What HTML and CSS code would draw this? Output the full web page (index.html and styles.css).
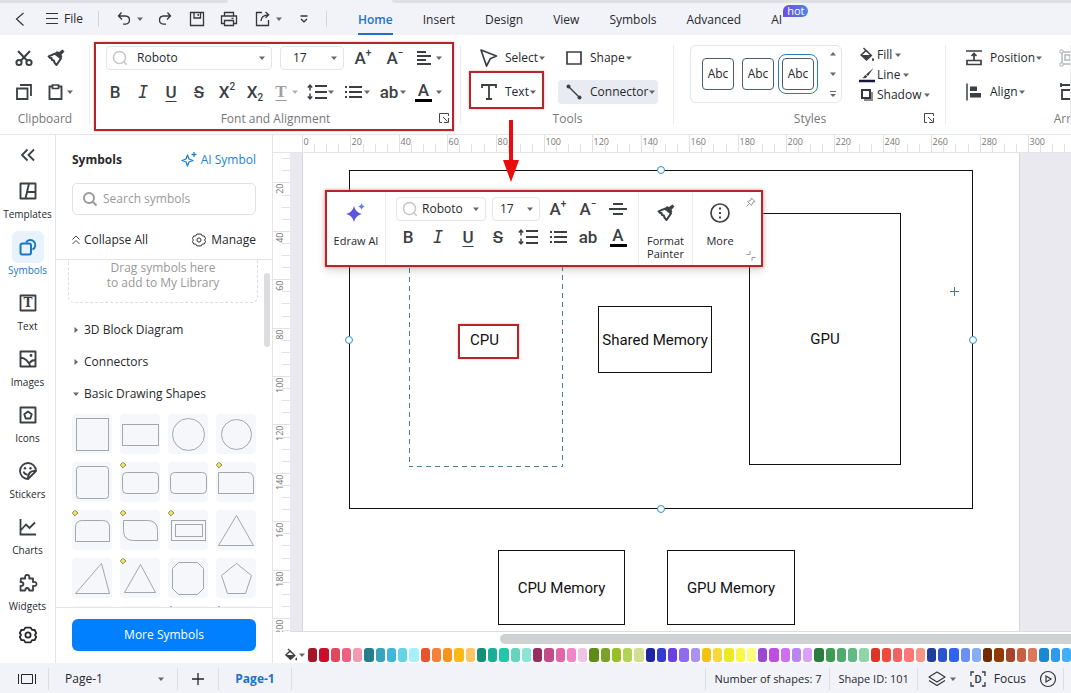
FILE: index.html
```
<!DOCTYPE html>
<html lang="en">
<head>
  <meta charset="utf-8">
  <title>Page-1</title>
  <link rel="stylesheet" href="styles.css">
</head>
<body>

  <!-- shared icons -->
  <svg class="defs" aria-hidden="true">
    <symbol id="caret" viewBox="0 0 8 8"><path d="M1 2.5h6L4 6z" fill="#666"/></symbol>
    <symbol id="caret-up" viewBox="0 0 8 8"><path d="M1 5.5h6L4 2z" fill="#666"/></symbol>
    <symbol id="find" viewBox="0 0 16 16"><circle cx="7.5" cy="7.5" r="6" fill="none" stroke="#c4c6ca" stroke-width="1.5"/><path d="M11.8 11.8l3 3" stroke="#c4c6ca" stroke-width="1.5"/></symbol>
    <symbol id="painter" viewBox="0 0 20 20"><path d="M16.500 1.500l2 2-3 3.300.8 2-1.500 1.500-5.500-5.500 1.500-1.500 2.200.8z" fill="#3c3f43"/><path d="M9 5.600l-6.400 2.800 1.600 1.700 1.300-.2.500 2.200 1.800.3.700 2.200 2 2.400 4.500-6.600z" fill="none" stroke="#3c3f43" stroke-width="2" stroke-linejoin="round"/></symbol>
    <symbol id="spacing" viewBox="0 0 20 20"><path d="M8 4h12M8 10h12M8 16h12" stroke="#3c3f43" stroke-width="2"/><path d="M3 3.500v5M3 11.500v5M.8 5.500L3 3.200l2.200 2.300M.8 14.500L3 16.800l2.200-2.300" fill="none" stroke="#3c3f43" stroke-width="1.500"/></symbol>
    <symbol id="bullets" viewBox="0 0 20 20"><path d="M6 5h13M6 10h13M6 15h13" stroke="#3c3f43" stroke-width="2"/><path d="M2 5h2M2 10h2M2 15h2" stroke="#3c3f43" stroke-width="2"/></symbol>
    <symbol id="launcher" viewBox="0 0 10 10"><path d="M3 9.500H.5v-9h9V3M4 4l4.500 4.500M5 9.500h4.500V5" fill="none" stroke="#44474b"/></symbol>
    <symbol id="bucket" viewBox="0 0 16 16"><path d="M7 3.500L12.300 8.500 7.500 13 2.200 8z" fill="none" stroke="#3c3f43" stroke-width="1.600"/><path d="M2.500 8h9.500l-4.700 4.700zM14 10.500c1.600 2.400 1.200 3.500 0 3.500s-1.600-1.100 0-3.500z" fill="#3c3f43"/><path d="M4.500 1l3.500 3.500" stroke="#3c3f43" stroke-width="1.500"/></symbol>
    <symbol id="gear" viewBox="0 0 20 20"><path d="M7.300 2.600h5.400l1.300 2.300 2.700.1 1.500 3.200-1.300 1.800 1.300 1.800-1.500 3.200-2.700.1-1.300 2.300H7.300L6 15.100l-2.700-.1-1.500-3.200L3.100 10 1.800 8.200 3.300 5 6 4.900z" fill="none" stroke="currentColor" stroke-width="var(--w, 1.800)" stroke-linejoin="round"/><circle cx="10" cy="10" r="2.600" fill="none" stroke="currentColor" stroke-width="var(--w, 1.800)"/></symbol>
    <g id="knob"><path d="M3 .2L5.800 3 3 5.800.2 3z" fill="#ece48a" stroke="#8a8430"/></g>
  </svg>

  <header class="titlebar">
    <div class="tabs-edge"><span class="edge-left"></span><span class="edge-right"></span></div>
    <div class="menu">
      <div class="quick">
        <button aria-label="Back"><svg width="20" height="20"><path d="M13.500 4L6.500 10l7 6.500" fill="none" stroke="#33363a" stroke-width="1.200"/></svg></button>
        <button class="file"><svg width="14" height="14"><path d="M1 1.500h12M1 6.500h12M1 11.500h12" stroke="#33363a"/></svg>File</button>
        <i class="rule"></i>
        <button class="split" aria-label="Undo"><svg width="20" height="20"><path d="M7.500 3.500L4.500 7l3.500 3.500M5 7h6.500q4 .3 4 4t-4 4.200H9" fill="none" stroke="#33363a" stroke-width="1.300"/></svg><svg class="caret"><use href="#caret"/></svg></button>
        <button aria-label="Redo"><svg width="20" height="20"><path d="M12.500 3.500L15.500 7 12 10.500M15 7H8.500q-4 .3-4 4t4 4.200H11" fill="none" stroke="#33363a" stroke-width="1.300"/></svg></button>
        <button aria-label="Save"><svg width="20" height="20"><path d="M3.500 3.500h13v13h-13zM7 3.500v5.500h6.500V3.500M11.200 5v2" fill="none" stroke="#33363a" stroke-width="1.300"/></svg></button>
        <button aria-label="Print"><svg width="20" height="20"><path d="M5.500 7V3.500h9V7M5 14.500H2.500V7h15v7.500H15M5.500 11.500h9v5h-9zM12.500 9.300h2" fill="none" stroke="#33363a" stroke-width="1.300"/></svg></button>
        <button class="split" aria-label="Share"><svg width="20" height="20"><path d="M9 3.500H3.500v13h12V11M8 12q.3-6 7.500-6.200M12.500 3l3.200 2.800-3.200 3" fill="none" stroke="#33363a" stroke-width="1.300"/></svg><svg class="caret"><use href="#caret"/></svg></button>
        <button aria-label="Customize"><svg width="20" height="20"><path d="M6.500 7h7M7 10l3 2.800 3-2.800" fill="none" stroke="#33363a" stroke-width="1.300"/></svg></button>
        <i class="rule"></i>
      </div>
      <nav>
        <a class="active" href="#">Home</a>
        <a href="#">Insert</a>
        <a href="#">Design</a>
        <a href="#">View</a>
        <a href="#">Symbols</a>
        <a href="#">Advanced</a>
        <a class="ai" href="#">AI<span class="hot">hot</span></a>
      </nav>
    </div>
  </header>

  <section class="ribbon">
    <div class="group clipboard">
      <div class="row">
        <button class="tool" aria-label="Cut"><svg width="20" height="20"><g fill="none" stroke="#3c3f43" stroke-width="2"><circle cx="5" cy="14.500" r="2.600"/><circle cx="15" cy="14.500" r="2.600"/><path d="M4 3l9 9.500M16 3l-9 9.500"/></g></svg></button>
        <button class="tool" aria-label="Format painter"><svg width="20" height="20"><use href="#painter"/></svg></button>
      </div>
      <div class="row">
        <button class="tool" aria-label="Copy"><svg width="20" height="20"><path d="M3 6.500h10.500V17H3zM6 3h11v11" fill="none" stroke="#3c3f43" stroke-width="1.800"/></svg></button>
        <button class="tool" aria-label="Paste"><svg width="20" height="20"><path d="M7 4.500H3.500V17h12V4.500H12" fill="none" stroke="#3c3f43" stroke-width="1.900"/><path d="M6.500 3h6v3.500h-6z" fill="none" stroke="#3c3f43" stroke-width="1.700"/></svg></button>
        <svg class="caret"><use href="#caret"/></svg>
      </div>
      <div class="caption">Clipboard</div>
    </div>

    <div class="group font">
      <div class="row first">
        <label class="combo family"><svg width="16" height="16"><use href="#find"/></svg><select aria-label="Font"><option>Roboto</option></select><svg class="caret"><use href="#caret"/></svg></label>
        <label class="combo size"><select aria-label="Font size"><option>17</option></select><svg class="caret"><use href="#caret"/></svg></label>
        <button class="tool glyph" aria-label="Increase font">A<sup>+</sup></button>
        <button class="tool glyph" aria-label="Decrease font">A<sup>−</sup></button>
        <button class="tool split" aria-label="Align text"><svg width="20" height="20"><path d="M2 4h9M2 8h14M2 12h9M2 16h14" stroke="#3c3f43" stroke-width="2"/></svg><svg class="caret"><use href="#caret"/></svg></button>
      </div>
      <div class="row second">
        <button class="tool glyph">B</button>
        <button class="tool glyph italic">I</button>
        <button class="tool glyph under">U</button>
        <button class="tool glyph strike">S</button>
        <button class="tool glyph">X<sup>2</sup></button>
        <button class="tool glyph">X<sub>2</sub></button>
        <span class="splits">
          <button class="tool split faded glyph"><span class="under serif">T</span><svg class="caret"><use href="#caret"/></svg></button>
          <button class="tool split" aria-label="Line spacing"><svg width="20" height="20"><use href="#spacing"/></svg><svg class="caret"><use href="#caret"/></svg></button>
          <button class="tool split" aria-label="Bullets"><svg width="20" height="20"><use href="#bullets"/></svg><svg class="caret"><use href="#caret"/></svg></button>
          <button class="tool split glyph"><span>ab</span><svg class="caret"><use href="#caret"/></svg></button>
          <button class="tool split glyph"><span class="color">A</span><svg class="caret"><use href="#caret"/></svg></button>
        </span>
      </div>
      <div class="caption">Font and Alignment</div>
      <svg class="launcher"><use href="#launcher"/></svg>
      <div class="mark"></div>
    </div>

    <div class="group tools">
      <div class="pair">
        <button class="wide"><svg width="20" height="20"><path d="M2 2l15.500 6-6.300 2.800L7.500 18z" fill="none" stroke="#3c3f43" stroke-width="1.700" stroke-linejoin="round"/></svg>Select<svg class="caret"><use href="#caret"/></svg></button>
        <button class="wide"><svg width="20" height="20"><path d="M3 4h14v12H3z" fill="none" stroke="#3c3f43" stroke-width="1.700"/></svg>Shape<svg class="caret"><use href="#caret"/></svg></button>
        <button class="wide text-tool"><svg width="20" height="20"><path d="M3 6V3h14v3M10 3v14M7 17h6" fill="none" stroke="#3c3f43" stroke-width="1.800"/></svg>Text<svg class="caret"><use href="#caret"/></svg>
          <span class="mark"></span>
          <svg class="arrow" width="18" height="62"><path d="M7 0h4v40h6L9 62 1 40h6z" fill="#e80c0c"/></svg>
        </button>
        <button class="wide on"><svg width="20" height="20"><path d="M4 4l12 12" stroke="#3c3f43" stroke-width="1.400"/><circle cx="4.500" cy="4.500" r="2" fill="#3c3f43"/><circle cx="15.500" cy="15.500" r="2" fill="#3c3f43"/></svg>Connector<svg class="caret"><use href="#caret"/></svg></button>
      </div>
      <div class="caption">Tools</div>
    </div>

    <div class="group styles">
      <div class="style-row">
        <div class="gallery">
          <button>Abc</button><button>Abc</button><button class="picked">Abc</button>
          <div class="steps">
            <svg class="caret"><use href="#caret-up"/></svg>
            <svg class="caret"><use href="#caret"/></svg>
            <svg width="8" height="8"><path d="M1 1.500h6" stroke="#666"/><path d="M1 4h6L4 7z" fill="#666"/></svg>
          </div>
        </div>
        <div class="paint">
          <button><svg width="16" height="16"><use href="#bucket"/></svg>Fill<svg class="caret"><use href="#caret"/></svg></button>
          <button><svg width="16" height="16"><path d="M14.500 1L9 9 7 7.500zM6.300 7.800l2 1.700q-1 2.500-5 1.500 1.500-.5 3-3.200z" fill="#3c3f43"/><path d="M0 14h16" stroke="#14163a" stroke-width="2.500"/></svg>Line<svg class="caret"><use href="#caret"/></svg></button>
          <button><svg width="16" height="16"><path d="M5 5h9v9H5z" fill="#8b8d90"/><path d="M3 3h8v8H3z" fill="#fff" stroke="#33363a" stroke-width="2"/></svg>Shadow<svg class="caret"><use href="#caret"/></svg></button>
        </div>
      </div>
      <div class="caption">Styles</div>
      <svg class="launcher"><use href="#launcher"/></svg>
    </div>

    <div class="group arrange">
      <div class="pair">
        <button class="wide"><svg width="20" height="20"><path d="M2 3h16M10 12V6M7.500 8L10 5.500 12.500 8M3 12.500h14v4H3z" fill="none" stroke="#3c3f43" stroke-width="1.700"/></svg>Position<svg class="caret"><use href="#caret"/></svg></button>
        <button class="wide faded" aria-label="Group"><svg width="20" height="20"><path d="M4 4h12v12H4zM7 7h5v5H7zM10 12h4" fill="none" stroke="#6c6f73" stroke-width="1.500"/><g fill="#fff" stroke="#6c6f73"><path d="M2 2h3v3H2zM15 2h3v3h-3zM2 15h3v3H2zM15 15h3v3h-3z"/></g></svg></button>
        <button class="wide"><svg width="20" height="20"><path d="M3 1.500v17" stroke="#3c3f43" stroke-width="1.500"/><path d="M6 4.500h7V9H6zM6 11h11v4.500H6z" fill="#3c3f43"/></svg>Align<svg class="caret"><use href="#caret"/></svg></button>
        <button class="wide" aria-label="Size"><svg width="20" height="20"><path d="M3 3h14M4 8h11v9H4zM3 1v4M17 1v4" fill="none" stroke="#3c3f43" stroke-width="1.800"/></svg></button>
      </div>
      <div class="caption">Arrange</div>
    </div>
  </section>

  <main>
    <aside class="rail">
      <button class="fold" aria-label="Collapse panel"><svg width="20" height="20"><path d="M9.500 4.500L4 10l5.500 5.500M16 4.500L10.500 10l5.500 5.500" fill="none" stroke="#3c3f43" stroke-width="1.800"/></svg></button>
      <button><span class="pic"><svg width="20" height="20"><path d="M2.500 2.500h15v15h-15zM11 2.500l-3.500 15M9.500 11h8" fill="none" stroke="#3c3f43" stroke-width="1.900" stroke-linejoin="round"/></svg></span>Templates</button>
      <button class="active"><span class="pic"><svg width="20" height="20"><path d="M8 5.500a5 5 0 1 1 6.500 7" fill="none" stroke="#1a78c2" stroke-width="2"/><rect x="2.500" y="6.500" width="10.500" height="11" rx="2" fill="none" stroke="#1a78c2" stroke-width="2"/></svg></span>Symbols</button>
      <button><span class="pic"><svg width="20" height="20"><path d="M2.500 2.500h15v15h-15z" fill="none" stroke="#3c3f43" stroke-width="1.800" stroke-linejoin="round"/><text class="icon-t" x="10" y="14">T</text></svg></span>Text</button>
      <button><span class="pic"><svg width="20" height="20"><path d="M2.500 2.500h15v15h-15zM2.500 8.500q7 1 10 9M17.500 11q-4 0-6 3" fill="none" stroke="#3c3f43" stroke-width="1.900" stroke-linejoin="round"/><circle cx="13" cy="6.500" r="1.400" fill="#3c3f43"/></svg></span>Images</button>
      <button><span class="pic"><svg width="20" height="20"><path d="M2.500 2.500h15v15h-15zM10 6.500l3.700 2.800-1.400 4.200H7.700L6.300 9.300z" fill="none" stroke="#3c3f43" stroke-width="1.900" stroke-linejoin="round"/></svg></span>Icons</button>
      <button><span class="pic"><svg width="20" height="20"><path d="M18 10a8 8 0 1 0-8 8zM18 10q-8-1-8 8M5.500 10.500q1 3 4 3.200" fill="none" stroke="#3c3f43" stroke-width="1.800" stroke-linejoin="round"/><circle cx="7" cy="7.300" r="1.200" fill="#3c3f43"/><circle cx="12.500" cy="7.300" r="1.200" fill="#3c3f43"/></svg></span>Stickers</button>
      <button><span class="pic"><svg width="20" height="20"><path d="M2.500 2v15.500H18M3 13l5-5.500 3.500 3.500L17 5.500" fill="none" stroke="#3c3f43" stroke-width="1.800"/></svg></span>Charts</button>
      <button><span class="pic"><svg width="20" height="20"><path d="M3 5.500h4.200q-.8-3.500 2-3.500t2 3.500H15V9q3.500-.5 3.500 2t-3.500 2v4.500h-3.800q-.3-2.500-2-2.500t-2 2.500H2.500V13q3 0 3-2t-3-2z" fill="none" stroke="#3c3f43" stroke-width="1.800" stroke-linejoin="round"/></svg></span>Widgets</button>
      <button class="last" aria-label="Settings"><svg width="20" height="20"><use href="#gear"/></svg></button>
    </aside>

    <aside class="panel">
      <div class="panel-head">
        <h2>Symbols</h2>
        <a href="#"><svg width="16" height="16"><path d="M6.500 3l1.500 4 4 1.500-4 1.500-1.500 4L5 10 1 8.500 5 7zM13 0v5M10.500 2.500h5" fill="none" stroke="#1f7fd6" stroke-width="1.300" stroke-linejoin="round"/></svg>AI Symbol</a>
      </div>
      <label class="search"><svg width="16" height="16"><circle cx="7" cy="7" r="5" fill="none" stroke="#999" stroke-width="2"/><path d="M10.500 10.500l4 4" stroke="#999" stroke-width="2"/></svg><input type="text" placeholder="Search symbols"></label>
      <div class="panel-tools">
        <button><svg width="8" height="12"><path d="M.5 5.500L4 2l3.500 3.500M.5 10L4 6.500 7.500 10" fill="none" stroke="#44474b"/></svg>Collapse All</button>
        <button class="manage"><svg width="16" height="16"><use href="#gear"/></svg>Manage</button>
      </div>
      <div class="library">
        <div class="drop">Drag symbols here<br>to add to My Library</div>
        <button class="section closed"><svg class="caret"><use href="#caret"/></svg>3D Block Diagram</button>
        <button class="section closed"><svg class="caret"><use href="#caret"/></svg>Connectors</button>
        <button class="section"><svg class="caret"><use href="#caret"/></svg>Basic Drawing Shapes</button>
        <div class="shapes">
          <svg><rect x="4.500" y="4.500" width="32" height="32"/></svg>
          <svg><rect x="2.500" y="10.500" width="36" height="21"/></svg>
          <svg><circle cx="20.500" cy="20.500" r="16"/></svg>
          <svg><circle cx="20.500" cy="20.500" r="15"/></svg>
          <svg><rect x="4.500" y="4.500" width="32" height="32" rx="3"/></svg>
          <svg><rect x="2.500" y="10.500" width="36" height="21" rx="4"/><use href="#knob"/></svg>
          <svg><rect x="2.500" y="10.500" width="36" height="21" rx="4"/></svg>
          <svg><path d="M2.500 10.500h29q6 0 6 7v14h-35z"/><use href="#knob"/></svg>
          <svg><path d="M3.500 31.500V17q0-6.500 7-6.500h20q7 0 7 6.500v14.500z"/><use href="#knob"/></svg>
          <svg><path d="M3.500 10.500h24q10 0 10 10v10h-24q-10 0-10-10z"/><use href="#knob"/></svg>
          <svg><rect x="3.500" y="10.500" width="34" height="20"/><rect x="7.500" y="14.500" width="27" height="12"/><use href="#knob"/></svg>
          <svg><path d="M20.500 5.500l17 30h-35z"/></svg>
          <svg><path d="M29.500 5.500l8 30h-34z"/></svg>
          <svg><path d="M20.500 6.500l15 28h-31z"/><use href="#knob"/></svg>
          <svg><path d="M10.500 4.500h19l6 6v20l-6 6h-19l-6-6v-20z"/></svg>
          <svg><path d="M20.500 5.500l15 12-6 18h-18l-6-18z"/></svg>
          <svg><path d="M12.500 4.500h15l8 16-8 16h-15l-8-16z"/></svg>
          <svg><path d="M12.500 4.500h15l8 8v16l-8 8h-15l-8-8v-16z"/></svg>
          <svg><path d="M12.500 8.500h24l-8 24h-24z"/><use href="#knob"/></svg>
          <svg><path d="M10.500 8.500h19l7 24h-33z"/><use href="#knob"/></svg>
        </div>
        <i class="thumb"></i>
      </div>
      <div class="panel-foot"><button class="more">More Symbols</button></div>
    </aside>

    <section class="work">
      <svg id="ruler-x" class="ruler-x"></svg>
      <div class="desk">
        <svg id="ruler-y" class="ruler-y"></svg>
        <div class="canvas">
          <div class="paper"></div>
          <div class="node outer"><i class="dot n"></i><i class="dot e"></i><i class="dot s"></i><i class="dot w"></i></div>
          <div class="node cpu"><svg class="dashes"><rect width="100%" height="100%"/></svg><span>CPU</span></div>
          <div class="node shared">Shared Memory</div>
          <div class="node gpu">GPU</div>
          <div class="node cpu-mem">CPU Memory</div>
          <div class="node gpu-mem">GPU Memory</div>
          <svg class="cross" width="9" height="9"><path d="M4.500 0v9M0 4.500h9" stroke="#2f7fa8"/></svg>

          <div class="float">
            <button class="stack"><svg width="20" height="20"><path d="M8 3q1.500 6.500 8 8-6.500 1.500-8 8-1.500-6.500-8-8 6.500-1.500 8-8z" fill="#5a55e0"/><path d="M15.500 0q.5 3 3.500 3.500-3 .5-3.500 3.500-.5-3-3.500-3.500 3-.5 3.500-3.500z" fill="#5b7de8"/></svg>Edraw AI</button>
            <div class="float-main">
              <div class="row">
                <label class="combo"><svg width="16" height="16"><use href="#find"/></svg><select aria-label="Font"><option>Roboto</option></select><svg class="caret"><use href="#caret"/></svg></label>
                <label class="combo size"><select aria-label="Font size"><option>17</option></select><svg class="caret"><use href="#caret"/></svg></label>
                <button class="tool glyph" aria-label="Increase font">A<sup>+</sup></button>
                <button class="tool glyph" aria-label="Decrease font">A<sup>−</sup></button>
                <button class="tool" aria-label="Align text"><svg width="20" height="20"><path d="M5 5h10M1 10h18M5 15h10" stroke="#3c3f43" stroke-width="2"/></svg></button>
              </div>
              <div class="row">
                <button class="tool glyph">B</button>
                <button class="tool glyph italic">I</button>
                <button class="tool glyph under">U</button>
                <button class="tool glyph strike">S</button>
                <button class="tool" aria-label="Line spacing"><svg width="20" height="20"><use href="#spacing"/></svg></button>
                <button class="tool" aria-label="Bullets"><svg width="20" height="20"><use href="#bullets"/></svg></button>
                <button class="tool glyph">ab</button>
                <button class="tool glyph"><span class="color">A</span></button>
              </div>
            </div>
            <button class="stack"><svg width="20" height="20"><use href="#painter"/></svg>Format<br>Painter</button>
            <button class="stack"><svg width="20" height="20"><circle cx="10" cy="10" r="9" fill="none" stroke="#3c3f43" stroke-width="1.700"/><path d="M10 4.500v2M10 9v2M10 13.500v2" stroke="#3c3f43" stroke-width="2"/></svg>More</button>
            <svg class="pin" width="10" height="10"><path d="M5.500 1L9 4.500 7 5 5.500 8.500 1.500 4.500 5 3zM3.300 6.700L.5 9.500" fill="none" stroke="#999"/></svg>
            <svg class="grip" width="10" height="10"><path d="M4 0v3.500H.5M9.500 6.500H6V10" fill="none" stroke="#999"/></svg>
          </div>
        </div>
      </div>
      <div class="hscroll"><i></i></div>
      <div class="palette">
        <button aria-label="Fill color"><svg width="14" height="14"><use href="#bucket"/></svg><svg class="caret"><use href="#caret"/></svg></button>
        <div id="swatches" class="swatches"></div>
      </div>
    </section>
  </main>

  <footer class="status">
    <button class="view" aria-label="Page view"><svg width="18" height="12"><path d="M.5 1v10M17.500 1v10M3.500 1.500h11v9h-11z" fill="none" stroke="#22252a"/></svg></button>
    <label class="page"><select aria-label="Page"><option>Page-1</option></select><svg class="caret"><use href="#caret"/></svg></label>
    <button class="add" aria-label="Add page"><svg width="12" height="12"><path d="M6 0v12M0 6h12" stroke="#22252a" stroke-width="1.300"/></svg></button>
    <a class="tab" href="#">Page-1</a>
    <span class="info">Number of shapes: 7</span>
    <span class="info">Shape ID: 101</span>
    <div class="modes">
      <button aria-label="Layers"><svg width="18" height="16"><path d="M9 1l8 5-8 5-8-5zM1 9.500l8 5 8-5" fill="none" stroke="#33363a" stroke-width="1.200" stroke-linejoin="round"/></svg><svg class="caret"><use href="#caret"/></svg></button>
      <button class="focus"><svg width="16" height="16"><path d="M4 1H1v4M12 1h3v4M4 15H1v-4M12 15h3v-4" fill="none" stroke="#33363a" stroke-width="1.300"/><text class="icon-d" x="8" y="12">D</text></svg>Focus</button>
      <button aria-label="Play"><svg width="18" height="18"><circle cx="9" cy="9" r="7.500" fill="none" stroke="#33363a" stroke-width="1.200"/><path d="M7 6l5 3-5 3z" fill="none" stroke="#33363a" stroke-width="1.200"/></svg></button>
    </div>
  </footer>

  <script>
    const colors = [
      "#a3162a", "#c8102e", "#e0485f", "#ee6080", "#f29bb0",
      "#287d8c", "#38a3bd", "#41b6d8", "#63d4e4", "#a8eefb",
      "#e8542e", "#f5803a", "#f79420", "#fcb814", "#fcc565",
      "#178f74", "#1aae96", "#22c7a8", "#66d3bf", "#8be5d5",
      "#962e62", "#c24c88", "#e066a8", "#f484c8", "#efc4e2",
      "#5e8a18", "#78a22a", "#98bf28", "#b2d353", "#d2de92",
      "#1f25a2", "#343bd2", "#6a3fe0", "#8f6cea", "#ab92f0",
      "#f2c40f", "#f7d93a", "#eae827", "#f8f750", "#fcfc80",
      "#9b4ad0", "#c04ddf", "#d06df0", "#b885f5", "#dba0f7",
      "#2b7d3f", "#3d9b55", "#50a96e", "#62b985", "#8fd5a8",
      "#dc3527", "#f14a3c", "#ee6464", "#fb7777", "#f69488",
      "#203f9b", "#2c54cc", "#3064ee", "#6a8ff5", "#88adf2",
      "#6e2c08", "#913a02", "#a2452c", "#c75f42", "#dd7757",
      "#1b88cf", "#2c9bef", "#45aef8"
    ];
    const swatches = document.getElementById("swatches");
    colors.forEach(color => {
      swatches.innerHTML += `<button style="background:${color}" aria-label="${color}"></button>`;
    });

    // 20 units on the ruler are 48.4px
    const step = 48.4 / 4;

    function drawRulers() {
      const rulerX = document.getElementById("ruler-x");
      const rulerY = document.getElementById("ruler-y");
      const width = rulerX.getBoundingClientRect().width;
      const height = rulerY.getBoundingClientRect().height;
      let x = "", y = "";
      for (let i = 0; 29 + i * step < width; i++) {
        const major = i % 4 === 0;
        const pos = Math.round(29 + i * step) + 0.5;
        x += `<path d="M${pos} ${major ? 0 : 9}V18"/>`;
        if (major) x += `<text x="${pos + 1}" y="10">${i * 5}</text>`;
      }
      for (let i = 2; i * step - 18 < height; i++) {
        const major = i % 4 === 0;
        const pos = Math.round(i * step) - 18.5;
        y += `<path d="M${major ? 0 : 9} ${pos}H17"/>`;
        if (major) y += `<text text-anchor="end" transform="translate(10 ${pos + 1}) rotate(-90)">${i * 5}</text>`;
      }
      rulerX.innerHTML = x;
      rulerY.innerHTML = y;
    }

    drawRulers();
    window.onresize = drawRulers;
  </script>
</body>
</html>
```
FILE: styles.css
```
* {
  box-sizing: border-box;
}
body {
  margin: 0;
  height: 100vh;
  display: flex;
  flex-direction: column;
  overflow: hidden;
  background: #fff;
  color: #26282c;
  font-family: "Open Sans", "Noto Sans", sans-serif;
  font-size: 12px;
  line-height: 16px;
}
button, select, input {
  font: inherit;
  color: inherit;
  background: none;
  border: none;
  padding: 0;
  margin: 0;
}
button {
  display: flex;
  align-items: center;
  justify-content: center;
  white-space: nowrap;
  cursor: pointer;
}
a {
  color: inherit;
  text-decoration: none;
}
svg {
  display: block;
  flex: none;
}
select {
  appearance: none;
  flex: 1;
  min-width: 0;
}
.defs {
  position: absolute;
  width: 0;
  height: 0;
}
.caret {
  width: 8px;
  height: 8px;
}

/* title bar */
.titlebar {
  flex: none;
  height: 35px;
  background: #f2f3f9;
}
.tabs-edge {
  display: flex;
  justify-content: space-between;
  gap: 164px;
  height: 3px;
}
.tabs-edge span {
  background: #dfe0e6;
}
.edge-left {
  width: 228px;
  border-bottom-right-radius: 4px;
}
.edge-right {
  flex: 1;
  border-bottom-left-radius: 4px;
}
.menu {
  display: flex;
  height: 32px;
}
.quick {
  display: flex;
  align-items: center;
  padding-left: 4px;
}
.quick button {
  width: 32px;
}
.quick .file {
  width: 56px;
  gap: 5px;
}
.quick .split {
  width: 43px;
  padding-left: 2px;
  gap: 2px;
}
.quick .rule {
  width: 1px;
  height: 16px;
  margin: 0 7px 0 6px;
  background: #d4d6de;
}
nav {
  display: flex;
  gap: 30px;
  padding-left: 24px;
}
nav a {
  position: relative;
  padding-top: 2px;
  line-height: 30px;
}
nav .active {
  color: #1a73c8;
  font-weight: 600;
  border-bottom: 2px solid #1a73c8;
}
.hot {
  position: absolute;
  left: 12px;
  top: 2px;
  padding: 0 4px;
  border-radius: 6px 6px 6px 0;
  background: linear-gradient(90deg, #6b4ede, #4c84e6);
  color: #fff;
  font-size: 11px;
  line-height: 12px;
}

/* ribbon */
.ribbon {
  flex: none;
  display: flex;
  height: 100px;
  border-bottom: 1px solid #e4e5ea;
}
.group {
  position: relative;
  flex: none;
  padding-top: 6px;
}
.group::after {
  content: "";
  position: absolute;
  right: 0;
  top: 10px;
  bottom: 10px;
  border-right: 1px solid #ebecf0;
}
.clipboard {
  width: 90px;
}
.font {
  width: 371px;
}
.tools {
  width: 213px;
}
.styles {
  width: 272px;
}
.arrange {
  flex: 1;
  min-width: 0;
  overflow: hidden;
}
.row {
  display: flex;
  align-items: center;
  height: 34px;
}
.tool {
  width: 28px;
  height: 24px;
}
.clipboard .row {
  padding-left: 8px;
}
.clipboard .tool {
  width: 32px;
}
.clipboard .caret {
  margin-left: -6px;
}
.caption {
  color: #777;
  text-align: center;
  line-height: 20px;
}
.combo {
  display: flex;
  align-items: center;
  height: 24px;
  border: 1px solid #e4e5ea;
  border-radius: 4px;
  padding: 0 5px;
  gap: 4px;
}
.family {
  width: 166px;
  gap: 9px;
}
.font .size {
  width: 64px;
  margin: 0 3px 0 8px;
  padding-left: 12px;
}
.font .first {
  padding-left: 16px;
}
.first .tool {
  width: 32px;
}
.font .second {
  padding-left: 11px;
}
.splits {
  display: flex;
  margin-left: 2px;
}
.row .split {
  width: 36px;
  justify-content: flex-start;
}
.split > span {
  width: 20px;
}
.first .split {
  width: 44px;
  padding-left: 4px;
}
.glyph {
  color: #3c3f43;
  font-family: Roboto, sans-serif;
  font-size: 17px;
  font-weight: 500;
}
.glyph sup, .glyph sub {
  font-size: 10px;
  line-height: 13px;
}
.glyph sup {
  align-self: flex-start;
}
.glyph sub {
  align-self: flex-end;
}
.italic {
  font-family: "DejaVu Sans Mono", monospace;
  font-style: italic;
}
.under {
  text-decoration: underline;
  text-underline-offset: 3px;
}
.strike {
  text-decoration: line-through;
}
.serif {
  font-family: "Liberation Serif", serif;
  font-weight: 700;
}
.color {
  line-height: 17px;
  border-bottom: 3px solid #000;
}
.glyph > .color {
  width: 17px;
}
.split > .color {
  margin-right: 3px;
}
.faded {
  opacity: 0.5;
}
.launcher {
  position: absolute;
  right: 12px;
  bottom: 11px;
  width: 10px;
  height: 10px;
}
.mark {
  position: absolute;
  border: 2px solid #b3262b;
  box-shadow: 0 0 2px #f3a0a0;
  pointer-events: none;
}
.font .mark {
  left: 4px;
  right: 7px;
  top: 7px;
  bottom: 3px;
}
.pair {
  display: grid;
  grid-template-columns: 85px max-content;
  grid-auto-rows: 34px;
  align-items: center;
  padding-left: 12px;
}
.arrange .pair {
  grid-template-columns: 94px max-content;
}
.wide {
  height: 24px;
  justify-content: flex-start;
  padding: 0 2px 0 6px;
}
.wide svg:first-child {
  margin-right: 6px;
}
.wide.on {
  background: #e9ebf2;
  border-radius: 4px;
}
.text-tool {
  position: relative;
}
.text-tool .mark {
  left: -4px;
  right: 14px;
  top: -9px;
  bottom: -5px;
}
.arrow {
  position: absolute;
  left: 29px;
  top: 40px;
  z-index: 5;
}
.arrange .caption {
  width: 260px;
}
.style-row {
  display: flex;
  height: 68px;
  padding: 4px 0 0 16px;
  gap: 17px;
}
.gallery {
  display: flex;
  align-items: center;
  gap: 8px;
  height: 58px;
  width: 152px;
  border: 1px solid #e4e5ea;
  border-radius: 6px;
  padding-left: 11px;
}
.gallery button {
  width: 32px;
  height: 32px;
  border: 1px solid #4b5f6b;
  border-radius: 4px;
}
.gallery .picked {
  outline: 1px solid #2a7fae;
  outline-offset: 3px;
}
.steps {
  display: flex;
  flex-direction: column;
  gap: 12px;
  padding-left: 7px;
}
.paint button {
  height: 20px;
  gap: 2px;
}

/* main */
main {
  flex: 1;
  min-height: 0;
  display: flex;
}
.rail {
  flex: none;
  width: 56px;
  border-right: 1px solid #e4e5ea;
  display: flex;
  flex-direction: column;
  overflow: hidden;
}
.rail button {
  flex: none;
  flex-direction: column;
  justify-content: flex-start;
  height: 56px;
  font-size: 10px;
  line-height: 14px;
}
.rail .fold {
  height: 40px;
  justify-content: center;
}
.rail .last {
  height: 24px;
  justify-content: center;
}
.pic {
  display: grid;
  place-items: center;
  width: 32px;
  height: 32px;
  border-radius: 6px;
}
.rail .active {
  color: #1a78c2;
}
.active .pic {
  background: #e7f2fd;
}
.icon-t {
  font: 700 12px "DejaVu Serif", serif;
  text-anchor: middle;
  fill: #3c3f43;
}
.icon-d {
  font: 500 11px Roboto, sans-serif;
  text-anchor: middle;
  fill: #33363a;
}
.panel {
  flex: none;
  width: 217px;
  display: flex;
  flex-direction: column;
  border-right: 1px solid #e4e5ea;
}
.panel-head {
  display: flex;
  align-items: center;
  justify-content: space-between;
  height: 48px;
  padding: 2px 16px 0;
}
.panel-head h2 {
  margin: 0;
  font-size: 12px;
  font-weight: 700;
}
.panel-head a {
  display: flex;
  gap: 4px;
  color: #1f7fd6;
}
.search {
  display: flex;
  align-items: center;
  gap: 5px;
  height: 32px;
  margin: 0 16px;
  padding: 0 9px;
  border: 1px solid #e0e1e6;
  border-radius: 5px;
}
.search input {
  flex: 1;
  min-width: 0;
}
.search input::placeholder {
  color: #9a9a9a;
}
.panel-tools {
  display: flex;
  justify-content: space-between;
  height: 45px;
  padding: 6px 16px 0;
  border-bottom: 1px solid #e4e5ea;
}
.panel-tools button {
  gap: 4px;
}
.manage {
  --w: 1.2;
}
.library {
  position: relative;
  flex: 1;
  min-height: 0;
  overflow: hidden;
}
.drop {
  height: 43px;
  margin: 0 14px 11px 12px;
  border: 1px dashed #dcdde2;
  border-top: none;
  border-radius: 0 0 6px 6px;
  color: #999;
  text-align: center;
  line-height: 15px;
}
.section {
  width: 100%;
  height: 32px;
  justify-content: flex-start;
  gap: 4px;
  padding-left: 16px;
}
.closed .caret {
  transform: rotate(-90deg);
}
.shapes {
  display: grid;
  grid-template-columns: repeat(4, 40px);
  gap: 8px;
  padding: 4px 16px 0;
}
.shapes svg {
  width: 40px;
  height: 40px;
  border-radius: 4px;
  background: #f6f7fb;
  fill: none;
  stroke: #a3a6ab;
}
.thumb {
  position: absolute;
  right: 2px;
  top: 13px;
  width: 6px;
  height: 74px;
  border-radius: 3px;
  background: #dcdde0;
}
.panel-foot {
  height: 56px;
  padding: 11px 16px 0;
  border-top: 1px solid #e4e5ea;
}
.more {
  width: 100%;
  height: 32px;
  border-radius: 6px;
  background: #0080ff;
  color: #fff;
}

/* drawing area */
.work {
  flex: 1;
  min-width: 0;
  display: flex;
  flex-direction: column;
}
.ruler-x {
  width: 100%;
  height: 18px;
  border-bottom: 1px solid #e4e5ea;
}
.ruler-x, .ruler-y {
  stroke: #e0e1e5;
  font-size: 9px;
}
.ruler-x text, .ruler-y text {
  fill: #777;
  stroke: none;
}
.desk {
  flex: 1;
  min-height: 0;
  display: flex;
}
.ruler-y {
  width: 17px;
  height: 100%;
}
.canvas {
  position: relative;
  flex: 1;
  padding: 0 51px 0 12px;
  background: #e9e9ef;
  border-bottom: 1px solid #dcdde2;
  font-family: Roboto, sans-serif;
}
.paper {
  height: 100%;
  background: #fff;
  border: 1px solid #d5d6dc;
  border-width: 0 1px;
}
.node {
  position: absolute;
  display: grid;
  place-items: center;
  border: 1px solid #111;
  color: #111;
  font-size: 15px;
}
.outer {
  left: 59px;
  top: 17px;
  width: 624px;
  height: 339px;
}
.cpu {
  left: 119px;
  top: 60px;
  width: 154px;
  height: 254px;
  border: none;
}
.dashes {
  position: absolute;
  width: 100%;
  height: 100%;
}
.dashes rect {
  fill: none;
  stroke: #4a7f9c;
  stroke-width: 2;
  stroke-dasharray: 5 4;
}
.cpu span {
  margin: 2px 0 0 5px;
  padding: 6px 18px 9px 10px;
  border: 2px solid #b3262b;
  box-shadow: 0 0 2px #f3a0a0;
}
.shared {
  left: 308px;
  top: 153px;
  width: 114px;
  height: 67px;
}
.gpu {
  left: 459px;
  top: 60px;
  width: 152px;
  height: 252px;
}
.cpu-mem {
  left: 208px;
  top: 397px;
  width: 127px;
  height: 75px;
}
.gpu-mem {
  left: 377px;
  top: 397px;
  width: 128px;
  height: 75px;
}
.dot {
  position: absolute;
  width: 8px;
  height: 8px;
  border: 1px solid #3f8fb8;
  border-radius: 50%;
  background: #f2fbff;
}
.n, .s {
  left: calc(50% - 4px);
}
.e, .w {
  top: calc(50% - 4px);
}
.n {
  top: -5px;
}
.s {
  bottom: -5px;
}
.e {
  right: -5px;
}
.w {
  left: -5px;
}
.cross {
  position: absolute;
  left: 660px;
  top: 134px;
}
.float {
  position: absolute;
  left: 35px;
  top: 37px;
  display: flex;
  width: 438px;
  height: 77px;
  background: #fff;
  border: 2px solid #b3262b;
  box-shadow: 0 0 3px #f08080, 0 4px 8px rgba(0, 0, 0, 0.15);
}
.stack {
  flex-direction: column;
  justify-content: flex-start;
  width: 54px;
  padding-top: 11px;
  font-family: "Open Sans", "Noto Sans", sans-serif;
  font-size: 11px;
  line-height: 13px;
}
.stack svg {
  margin-bottom: 11px;
}
.stack:first-child {
  width: 58px;
}
.float-main {
  width: 254px;
  padding: 3px 0 0 7px;
  border: 1px solid #ebecf0;
  border-width: 0 1px;
}
.float-main + .stack {
  border-right: 1px solid #ebecf0;
}
.float .row {
  height: 28px;
}
.float .tool {
  width: 30px;
}
.float .combo {
  width: 90px;
  margin: 0 6px 0 3px;
  font-family: "Open Sans", "Noto Sans", sans-serif;
}
.float .combo.size {
  width: 48px;
  margin: 0 3px 0 0;
  padding-left: 7px;
}
.pin, .grip {
  position: absolute;
  right: 5px;
}
.pin {
  top: 5px;
}
.grip {
  bottom: 4px;
}
.hscroll {
  height: 15px;
  padding: 2px 0 0 227px;
}
.hscroll i {
  display: block;
  height: 10px;
  border-radius: 5px 0 0 5px;
  background: #cfd1d2;
}
.palette {
  display: flex;
  height: 16px;
  padding-left: 11px;
}
.palette > button {
  width: 24px;
  justify-content: flex-start;
}
.swatches {
  flex: 1;
  display: flex;
  gap: 2px;
  padding-top: 1px;
}
.swatches button {
  flex: 1;
  height: 14px;
  border-radius: 3px;
}

/* status bar */
.status {
  flex: none;
  display: flex;
  align-items: center;
  height: 30px;
  padding-top: 2px;
  background: #f2f3f9;
}
.status > * {
  height: 22px;
  border-right: 1px solid #dcdee6;
}
.view {
  width: 49px;
  padding-left: 6px;
}
.page {
  display: flex;
  align-items: center;
  width: 129px;
  padding: 0 12px 0 16px;
}
.add {
  width: 41px;
}
.tab {
  width: 73px;
  text-align: center;
  line-height: 22px;
  color: #1a73c8;
  font-weight: 700;
}
.info {
  padding: 0 8px;
  font-size: 11px;
  line-height: 22px;
}
.tab + .info {
  margin-left: auto;
  border-left: 1px solid #dcdee6;
}
.modes {
  display: flex;
  align-items: center;
  gap: 13px;
  margin-right: 7px;
  padding: 0 6px 0 10px;
}
.modes button {
  gap: 3px;
}
.modes .focus {
  gap: 8px;
}
```
